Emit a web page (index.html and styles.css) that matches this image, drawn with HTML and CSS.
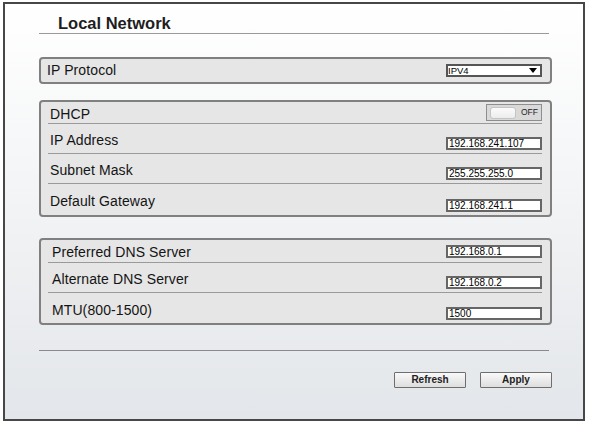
FILE: index.html
```html
<!DOCTYPE html>
<html>
<head>
<meta charset="utf-8">
<title>Local Network</title>
<link rel="stylesheet" href="styles.css">
</head>
<body>
<div class="frame">
  <div class="header"><h1 class="title">Local Network</h1></div>

  <div class="box proto">
    <span class="label">IP Protocol</span>
    <div class="select">
      <span class="select-text">IPV4</span>
      <svg class="arrow" width="8" height="5" viewBox="0 0 8 5"><path d="M0 0H8L4 5Z" fill="#000"/></svg>
    </div>
  </div>

  <div class="box group dhcp">
    <div class="row row-head">
      <span class="label">DHCP</span>
      <div class="toggle"><span class="knob"></span><span class="toggle-text">OFF</span></div>
    </div>
    <div class="row">
      <span class="label">IP Address</span>
      <input class="field" type="text" value="192.168.241.107">
    </div>
    <div class="row">
      <span class="label">Subnet Mask</span>
      <input class="field" type="text" value="255.255.255.0">
    </div>
    <div class="row row-last">
      <span class="label">Default Gateway</span>
      <input class="field" type="text" value="192.168.241.1">
    </div>
  </div>

  <div class="box group dns">
    <div class="row row-head">
      <span class="label">Preferred DNS Server</span>
      <input class="field" type="text" value="192.168.0.1">
    </div>
    <div class="row">
      <span class="label">Alternate DNS Server</span>
      <input class="field" type="text" value="192.168.0.2">
    </div>
    <div class="row row-last">
      <span class="label">MTU(800-1500)</span>
      <input class="field" type="text" value="1500">
    </div>
  </div>

  <div class="separator"></div>

  <div class="actions">
    <button class="btn" type="button">Refresh</button>
    <button class="btn" type="button">Apply</button>
  </div>
</div>
</body>
</html>
```

FILE: styles.css
```css
html, body {
  margin: 0;
  padding: 0;
  background: #ffffff;
}

body {
  font-family: "Liberation Sans", Arial, sans-serif;
  color: #141414;
}

.frame {
  margin: 2px 0 0 3px;
  width: 582px;
  height: 419px;
  box-sizing: border-box;
  border: 2px solid #474747;
  padding: 0 31px 0 34px;
  display: flex;
  flex-direction: column;
  background: linear-gradient(to bottom, #ffffff 0%, #f6f7f8 35%, #e3e6ea 100%);
}

.header {
  padding: 9px 0 0 19px;
  margin-right: 3px;
  border-bottom: 1px solid #9a9a9a;
}

.title {
  margin: 0;
  font-size: 16.5px;
  line-height: 20px;
  font-weight: bold;
  color: #1e1e1e;
}

.box {
  box-sizing: border-box;
  border: 2px solid #808080;
  border-radius: 4px;
  background: #e6e6e6;
}

.label {
  font-size: 14px;
  line-height: 15px;
  letter-spacing: 0.1px;
  white-space: nowrap;
}

.proto {
  margin-top: 23px;
  height: 27px;
  padding: 0 8px 0 6px;
  display: flex;
  align-items: center;
  justify-content: space-between;
}

.select {
  width: 96px;
  height: 13px;
  box-sizing: border-box;
  border: 2px solid #555;
  background: #fff;
  display: flex;
  align-items: center;
  justify-content: space-between;
  padding: 0 3px 0 0;
}

.select-text {
  font-size: 9.5px;
  line-height: 9px;
  color: #000;
}

.arrow {
  display: block;
}

.group {
  display: flex;
  flex-direction: column;
  padding: 0 8px 0 7px;
}

.dhcp {
  margin-top: 16px;
  height: 117px;
}

.dns {
  margin-top: 21px;
  height: 87px;
}

.dhcp .label {
  padding-left: 2px;
}

.dns .label {
  padding-left: 4px;
}

.row {
  box-sizing: border-box;
  height: 30px;
  display: flex;
  justify-content: space-between;
  align-items: flex-end;
  padding-bottom: 3px;
  border-bottom: 1px solid #9a9a9a;
}

.row .label {
  align-self: center;
  padding-top: 7px;
}

.row-head {
  height: 22px;
  align-items: center;
  padding-bottom: 0;
}

.row-head .label {
  padding-top: 3px;
}

.dns .row-head {
  height: 23px;
}

.row-last {
  flex: 1;
  height: auto;
  border-bottom: none;
}

.field {
  width: 96px;
  height: 13px;
  box-sizing: border-box;
  margin: 0;
  padding: 0 0 0 1px;
  border: 2px solid #666;
  background: #fff;
  font-family: "Liberation Sans", Arial, sans-serif;
  font-size: 10px;
  color: #000;
  outline: none;
}

.toggle {
  width: 56px;
  height: 17px;
  box-sizing: border-box;
  border: 1px solid #8e8e8e;
  background: #d9d9d9;
  display: flex;
  align-items: center;
  justify-content: space-between;
  padding: 0 3px 0 3px;
}

.knob {
  width: 26px;
  height: 12px;
  box-sizing: border-box;
  border: 1px solid #c4c4c4;
  border-radius: 3px;
  background: linear-gradient(to bottom, #fbfbfb, #ececec);
}

.toggle-text {
  font-size: 8.5px;
  line-height: 9px;
  color: #222;
}

.separator {
  margin-top: 25px;
  margin-right: 3px;
  border-top: 1px solid #8a8a8a;
}

.actions {
  margin-top: 21px;
  display: flex;
  justify-content: flex-end;
  gap: 14px;
}

.btn {
  width: 72px;
  height: 16px;
  box-sizing: border-box;
  margin: 0;
  padding: 0;
  border: 1px solid #6e6e6e;
  border-radius: 1px;
  background: linear-gradient(to bottom, #f9f9f9, #dedede);
  font-family: "Liberation Sans", Arial, sans-serif;
  font-size: 10px;
  font-weight: bold;
  color: #222;
  line-height: 14px;
}
```
